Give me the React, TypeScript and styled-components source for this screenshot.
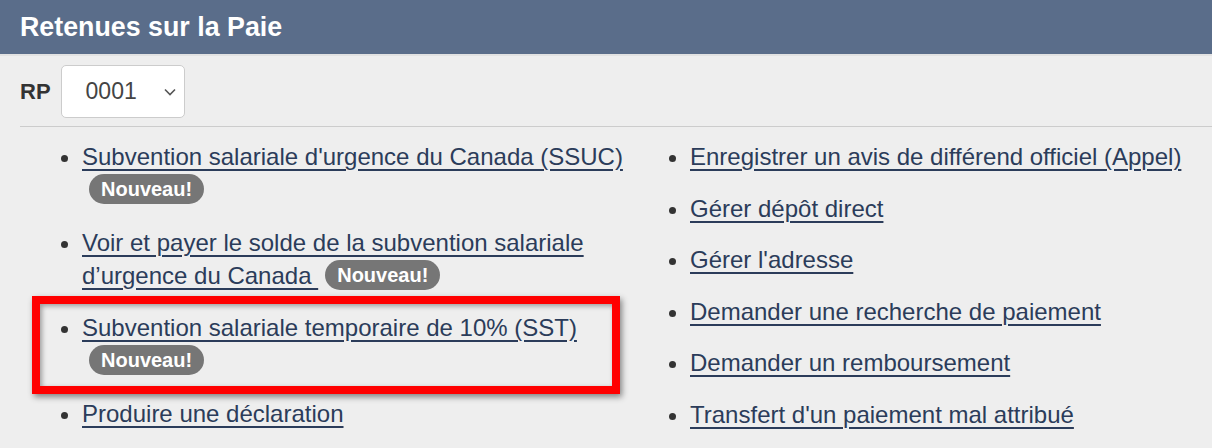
import React from 'react';
import styled, { createGlobalStyle } from 'styled-components';

const GlobalStyle = createGlobalStyle`
    body {
        margin: 0;
        background: #eeeeee;
        font-family: 'Liberation Sans', Arial, sans-serif;
        color: #333333;
    }
`;

const Panel = styled.section`
    width: 1212px;
    height: 448px;
    overflow: hidden;
    background: #eeeeee;
`;

const Header = styled.h2`
    display: flex;
    align-items: center;
    height: 54px;
    margin: 0;
    padding: 0 20px;
    background: #5a6d8a;
    border-bottom: 2px solid #e2e2e2;
    color: #ffffff;
    font-size: 26.8px;
    font-weight: 700;
`;

const Toolbar = styled.div`
    display: flex;
    align-items: center;
    gap: 10px;
    padding: 9px 0 8px 20px;
`;

const Label = styled.label`
    font-size: 22px;
    font-weight: 700;
    color: #333333;
`;

const SelectBox = styled.div`
    display: flex;
    align-items: center;
    justify-content: space-between;
    box-sizing: border-box;
    width: 124px;
    height: 53px;
    padding: 0 8px 0 24px;
    background: #ffffff;
    border: 1px solid #cccccc;
    border-radius: 5px;
    font-size: 23px;
    color: #444444;
`;

const Divider = styled.hr`
    margin: 0 0 0 20px;
    border: 0;
    border-top: 1px solid #cccccc;
`;

const Columns = styled.div`
    display: grid;
    grid-template-columns: 630px 1fr;
    padding: 13px 0 0 20px;
`;

const List = styled.ul<{ $indent: number; $gap: number }>`
    margin: 0;
    padding: 0 0 0 ${({ $indent }) => $indent}px;
    list-style: disc;

    & > li {
        margin-bottom: ${({ $gap }) => $gap}px;
    }
`;

const Item = styled.li<{ $highlight?: boolean }>`
    position: relative;
    font-size: 24px;
    line-height: 33px;
    color: #333333;

    ${({ $highlight }) =>
        $highlight &&
        `
        &::after {
            content: '';
            position: absolute;
            top: -15px;
            bottom: -17px;
            left: -50px;
            right: 30px;
            border: 8px solid #ff0000;
            box-shadow: 2px 3px 6px rgba(0, 0, 0, 0.45),
                inset 2px 2px 5px rgba(0, 0, 0, 0.35);
            pointer-events: none;
        }
    `}
`;

const Link = styled.a`
    color: #2b3c5a;
    text-decoration: underline;
    text-decoration-thickness: 2px;
    text-underline-offset: 4px;
`;

const Badge = styled.span`
    display: inline-block;
    height: 30px;
    margin-left: 7px;
    padding: 0 12px;
    border-radius: 15px;
    background: #767676;
    color: #ffffff;
    font-size: 20px;
    font-weight: 700;
    line-height: 30px;
    vertical-align: 2px;
`;

const Chevron = () => (
    <svg width="12" height="8" viewBox="0 0 12 8">
        <path
            d="M1 1.5 L6 6.5 L11 1.5"
            fill="none"
            stroke="#555"
            strokeWidth="1.6"
        />
    </svg>
);

const LEFT_ITEMS = [
    { text: "Subvention salariale d'urgence du Canada (SSUC)", badge: true },
    {
        text: 'Voir et payer le solde de la subvention salariale d\u2019urgence du Canada ',
        badge: true,
    },
    {
        text: 'Subvention salariale temporaire de 10% (SST)',
        badge: true,
        highlight: true,
    },
    { text: 'Produire une déclaration' },
];

const RIGHT_ITEMS = [
    'Enregistrer un avis de différend officiel (Appel)',
    'Gérer dépôt direct',
    "Gérer l'adresse",
    'Demander une recherche de paiement',
    'Demander un remboursement',
    "Transfert d'un paiement mal attribué",
];

const App = () => {
    return (
        <Panel>
            <GlobalStyle />
            <Header>Retenues sur la Paie</Header>

            <Toolbar>
                <Label>RP</Label>
                <SelectBox>
                    <span>0001</span>
                    <Chevron />
                </SelectBox>
            </Toolbar>

            <Divider />

            <Columns>
                <List $indent={62} $gap={19.5}>
                    {LEFT_ITEMS.map((item, i) => (
                        <Item key={i} $highlight={item.highlight}>
                            <Link href="#">{item.text}</Link>{' '}
                            {item.badge && <Badge>Nouveau!</Badge>}
                        </Item>
                    ))}
                </List>

                <List $indent={40} $gap={18.5}>
                    {RIGHT_ITEMS.map((text, i) => (
                        <Item key={i}>
                            <Link href="#">{text}</Link>
                        </Item>
                    ))}
                </List>
            </Columns>
        </Panel>
    );
};

export default App;
